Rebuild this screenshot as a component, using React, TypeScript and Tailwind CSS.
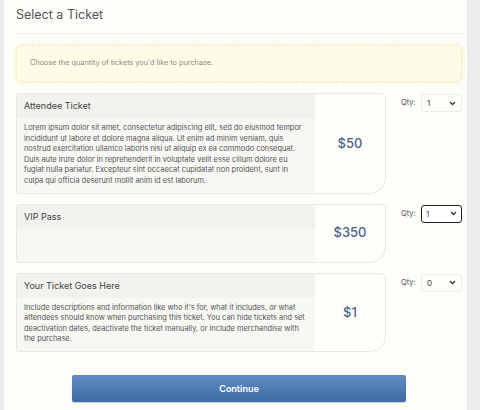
import React from 'react';

interface Ticket {
  name: string;
  description: string;
  price: string;
  qty: string;
  focused?: boolean;
}

const tickets: Ticket[] = [
  {
    name: 'Attendee Ticket',
    description:
      'Lorem ipsum dolor sit amet, consectetur adipiscing elit, sed do eiusmod tempor incididunt ut labore et dolore magna aliqua. Ut enim ad minim veniam, quis nostrud exercitation ullamco laboris nisi ut aliquip ex ea commodo consequat. Duis aute irure dolor in reprehenderit in voluptate velit esse cillum dolore eu fugiat nulla pariatur. Excepteur sint occaecat cupidatat non proident, sunt in culpa qui officia deserunt mollit anim id est laborum.',
    price: '$50',
    qty: '1',
  },
  { name: 'VIP Pass', description: '', price: '$350', qty: '1', focused: true },
  {
    name: 'Your Ticket Goes Here',
    description:
      "Include descriptions and information like who it's for, what it includes, or what attendees should know when purchasing this ticket. You can hide tickets and set deactivation dates, deactivate the ticket manually, or include merchandise with the purchase.",
    price: '$1',
    qty: '0',
  },
];

const Chevron = () => (
  <svg width="7" height="5" viewBox="0 0 7 5" fill="none">
    <path d="M1 1l2.5 2.5L6 1" stroke="#333" strokeWidth="1.3" />
  </svg>
);

const TicketRow: React.FC<{ ticket: Ticket }> = ({ ticket }) => (
  <div className="flex items-start">
    <div className="flex w-[370px] shrink-0 border border-[#e9e9e4] rounded-tl-[3px] rounded-bl-[3px] rounded-tr-[5px] rounded-br-[16px] overflow-hidden bg-[#fdfdfa]">
      <div className="w-[298px] flex flex-col bg-[#f7f7f3]">
        <div className="h-[24px] flex items-center px-[7px] bg-[#f1f1ed] text-[9px] text-[#444]">
          {ticket.name}
        </div>
        <div className="px-[7px] pt-[5px] pb-[6px] min-h-[33px] text-[7.4px] leading-[10.6px] text-[#555]">
          {ticket.description}
        </div>
      </div>
      <div className="flex-1 flex items-center justify-center text-[13px] font-medium text-[#4d6384]">
        {ticket.price}
      </div>
    </div>
    <div className="flex items-center ml-[15px] mt-[1px]">
      <span className="w-[20px] text-[7.5px] text-[#555]">Qty:</span>
      <div
        className={
          ticket.focused
            ? 'w-[41px] h-[18px] flex items-center justify-between pl-[4px] pr-[4px] rounded-[3px] border-[1.5px] border-[#222] bg-white text-[8px] text-[#444]'
            : 'w-[41px] h-[18px] flex items-center justify-between pl-[5px] pr-[5px] rounded-[3px] border border-[#ececec] bg-[#fdfdfa] text-[8px] text-[#444]'
        }
      >
        <span>{ticket.qty}</span>
        <Chevron />
      </div>
    </div>
  </div>
);

export default function App() {
  return (
    <div className="w-full h-[410px] bg-[#ececec] flex font-['Inter',sans-serif] overflow-hidden">
      <div className="ml-[4px] w-[463px] h-full bg-[#fdfdf9] pl-[12px] pr-[5px] pt-[6px]">
        <h1 className="text-[12.5px] text-[#555] leading-[18px]">Select a Ticket</h1>
        <div className="mt-[9px] border-t border-[#f0f0eb]" />
        <div className="mt-[11px] h-[37px] flex items-center px-[13px] rounded-[6px] border border-dashed border-[#f3e9bd] bg-[#fefbe7] shadow-[0_0_4px_rgba(240,225,160,0.6)] text-[7.3px] text-[#8a8a8a]">
          Choose the quantity of tickets you'd like to purchase.
        </div>
        <div className="mt-[11px] flex flex-col gap-[10px]">
          {tickets.map((t) => (
            <TicketRow key={t.name} ticket={t} />
          ))}
        </div>
        <div className="mt-[23px] flex justify-center">
          <button className="w-[334px] h-[27px] rounded-[2px] bg-gradient-to-b from-[#5d8ec4] to-[#3f6ca2] text-white text-[9px] font-semibold shadow-[0_1px_1px_rgba(0,0,0,0.2)]">
            Continue
          </button>
        </div>
      </div>
    </div>
  );
}
